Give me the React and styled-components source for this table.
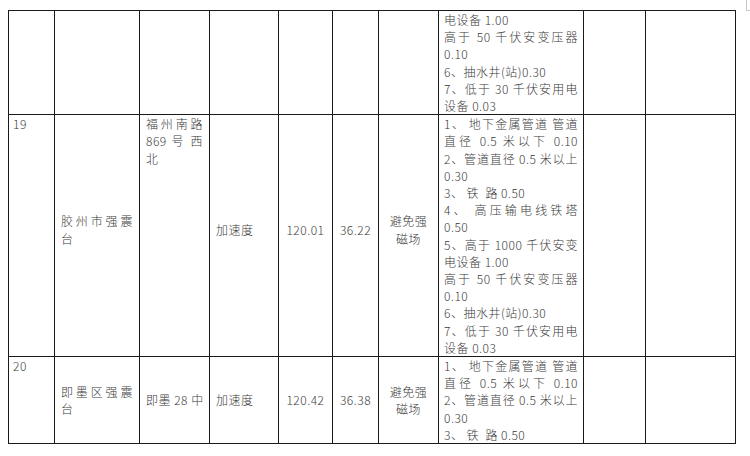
import styled, { createGlobalStyle } from "styled-components";

const GlobalStyle = createGlobalStyle`
  html, body {
    margin: 0;
    padding: 0;
    background: #fff;
  }
  body {
    font-family: "Noto Sans CJK SC", "Noto Sans", sans-serif;
    color: #3a3a3a;
  }
`;

const Page = styled.div`
  position: relative;
  width: 750px;
  height: 456px;
  padding: 10px 0 0 8px;
  box-sizing: border-box;
  overflow: hidden;
`;

const CropMark = styled.div`
  position: absolute;
  top: 0;
  right: 0;
  width: 3px;
  height: 10px;
  border-left: 1px solid #c8c8c8;
  border-bottom: 1px solid #c8c8c8;
`;

const Table = styled.table`
  border-collapse: collapse;
  table-layout: fixed;
  width: 727px;
  font-size: 12px;
  line-height: 17.2px;
  letter-spacing: 0.5px;
  font-weight: 300;
`;

const Cell = styled.td`
  border: 1px solid #1a1a1a;
  padding: 0 ${(p) => p.$px ?? 6}px ${(p) => p.$lift ?? 0}px;
  vertical-align: ${(p) => p.$valign || "top"};
  text-align: ${(p) => p.$align || "left"};
  white-space: nowrap;
  overflow: hidden;
`;

const Line = styled.div`
  white-space: pre;
  text-align: ${(p) => (p.$fill ? "justify" : "inherit")};
  text-align-last: ${(p) => (p.$fill ? "justify" : "auto")};
`;

const widths = [46, 85, 70, 69, 54, 46, 60, 145, 62, 90];

const notes = [
  ["1、 地下金属管道 管道", true],
  ["直径 0.5 米以下 0.10", true],
  ["2、管道直径 0.5 米以上", true],
  ["0.30"],
  ["3、 铁  路 0.50"],
  ["4、 高压输电线铁塔", true],
  ["0.50"],
  ["5、高于 1000 千伏安变", true],
  ["电设备 1.00"],
  ["高于 50 千伏安变压器", true],
  ["0.10"],
  ["6、抽水井(站)0.30"],
  ["7、低于 30 千伏安用电", true],
  ["设备 0.03"],
];

const Lines = ({ items }) =>
  items.map(([text, fill], i) => (
    <Line key={i} $fill={fill}>
      {text}
    </Line>
  ));

const Station = ({ no, name, place, placeMiddle, lon, lat, notesTo, lift }) => (
  <tr>
    <Cell $px={4}>{no}</Cell>
    <Cell $valign="middle" $lift={lift}>
      <Lines items={name} />
    </Cell>
    <Cell $valign={placeMiddle ? "middle" : "top"} $lift={placeMiddle ? lift : 0}>
      <Lines items={place} />
    </Cell>
    <Cell $valign="middle" $lift={lift}>
      加速度
    </Cell>
    <Cell $valign="middle" $align="center" $lift={lift}>
      {lon}
    </Cell>
    <Cell $valign="middle" $align="center" $lift={lift}>
      {lat}
    </Cell>
    <Cell $valign="middle" $align="center" $lift={lift}>
      <Line>避免强</Line>
      <Line>磁场</Line>
    </Cell>
    <Cell $px={5}>
      <Lines items={notes.slice(0, notesTo)} />
    </Cell>
    <Cell />
    <Cell />
  </tr>
);

export default function App() {
  return (
    <>
      <GlobalStyle />
      <Page>
        <CropMark />
        <Table>
          <colgroup>
            {widths.map((w, i) => (
              <col key={i} style={{ width: w }} />
            ))}
          </colgroup>
          <tbody>
            <tr>
              <Cell />
              <Cell />
              <Cell />
              <Cell />
              <Cell />
              <Cell />
              <Cell />
              <Cell $px={5}>
                <Lines items={notes.slice(8)} />
              </Cell>
              <Cell />
              <Cell />
            </tr>
            <Station
              no="19"
              name={[["胶州市强震", true], ["台"]]}
              place={[["福州南路", true], ["869 号 西", true], ["北"]]}
              lon="120.01"
              lat="36.22"
              notesTo={14}
              lift={12}
            />
            <Station
              no="20"
              name={[["即墨区强震", true], ["台"]]}
              place={[["即墨 28 中"]]}
              placeMiddle
              lon="120.42"
              lat="36.38"
              notesTo={5}
              lift={0}
            />
          </tbody>
        </Table>
      </Page>
    </>
  );
}
